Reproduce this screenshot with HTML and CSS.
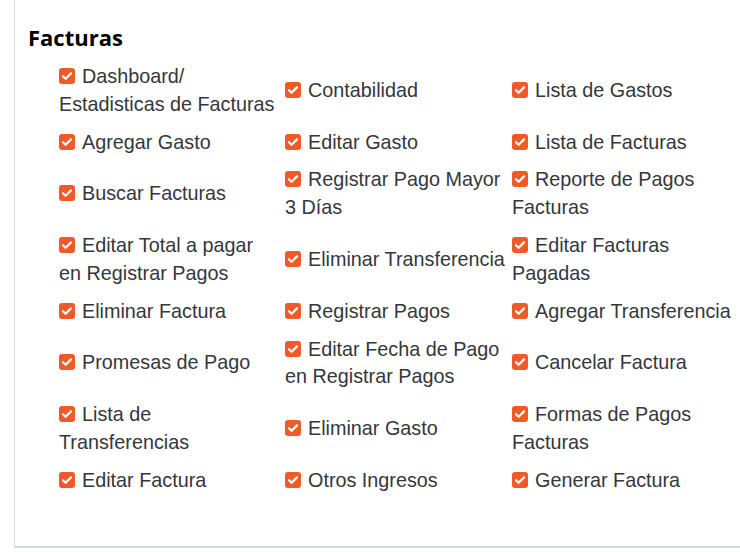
FILE: index.html
```html
<!DOCTYPE html>
<html lang="es">

<head>
    <meta charset="UTF-8">
    <meta name="viewport" content="width=device-width, initial-scale=1.0">
    <title>Permisos - Facturas</title>
    <link rel="stylesheet" href="styles.css">
</head>

<body>
    <div class="card">
        <h3 class="section-title">Facturas</h3>
        <div class="perm-grid">
            <label class="perm"><span class="check"><svg viewBox="0 0 16 16"><path d="M4 8.2l2.6 2.6L12 5.4"/></svg></span>Dashboard/ Estadisticas de Facturas</label>
            <label class="perm"><span class="check"><svg viewBox="0 0 16 16"><path d="M4 8.2l2.6 2.6L12 5.4"/></svg></span>Contabilidad</label>
            <label class="perm"><span class="check"><svg viewBox="0 0 16 16"><path d="M4 8.2l2.6 2.6L12 5.4"/></svg></span>Lista de Gastos</label>

            <label class="perm"><span class="check"><svg viewBox="0 0 16 16"><path d="M4 8.2l2.6 2.6L12 5.4"/></svg></span>Agregar Gasto</label>
            <label class="perm"><span class="check"><svg viewBox="0 0 16 16"><path d="M4 8.2l2.6 2.6L12 5.4"/></svg></span>Editar Gasto</label>
            <label class="perm"><span class="check"><svg viewBox="0 0 16 16"><path d="M4 8.2l2.6 2.6L12 5.4"/></svg></span>Lista de Facturas</label>

            <label class="perm"><span class="check"><svg viewBox="0 0 16 16"><path d="M4 8.2l2.6 2.6L12 5.4"/></svg></span>Buscar Facturas</label>
            <label class="perm"><span class="check"><svg viewBox="0 0 16 16"><path d="M4 8.2l2.6 2.6L12 5.4"/></svg></span>Registrar Pago Mayor 3 Días</label>
            <label class="perm"><span class="check"><svg viewBox="0 0 16 16"><path d="M4 8.2l2.6 2.6L12 5.4"/></svg></span>Reporte de Pagos Facturas</label>

            <label class="perm"><span class="check"><svg viewBox="0 0 16 16"><path d="M4 8.2l2.6 2.6L12 5.4"/></svg></span>Editar Total a pagar en Registrar Pagos</label>
            <label class="perm"><span class="check"><svg viewBox="0 0 16 16"><path d="M4 8.2l2.6 2.6L12 5.4"/></svg></span>Eliminar Transferencia</label>
            <label class="perm"><span class="check"><svg viewBox="0 0 16 16"><path d="M4 8.2l2.6 2.6L12 5.4"/></svg></span>Editar Facturas Pagadas</label>

            <label class="perm"><span class="check"><svg viewBox="0 0 16 16"><path d="M4 8.2l2.6 2.6L12 5.4"/></svg></span>Eliminar Factura</label>
            <label class="perm"><span class="check"><svg viewBox="0 0 16 16"><path d="M4 8.2l2.6 2.6L12 5.4"/></svg></span>Registrar Pagos</label>
            <label class="perm"><span class="check"><svg viewBox="0 0 16 16"><path d="M4 8.2l2.6 2.6L12 5.4"/></svg></span>Agregar Transferencia</label>

            <label class="perm"><span class="check"><svg viewBox="0 0 16 16"><path d="M4 8.2l2.6 2.6L12 5.4"/></svg></span>Promesas de Pago</label>
            <label class="perm"><span class="check"><svg viewBox="0 0 16 16"><path d="M4 8.2l2.6 2.6L12 5.4"/></svg></span>Editar Fecha de Pago en Registrar Pagos</label>
            <label class="perm"><span class="check"><svg viewBox="0 0 16 16"><path d="M4 8.2l2.6 2.6L12 5.4"/></svg></span>Cancelar Factura</label>

            <label class="perm"><span class="check"><svg viewBox="0 0 16 16"><path d="M4 8.2l2.6 2.6L12 5.4"/></svg></span>Lista de Transferencias</label>
            <label class="perm"><span class="check"><svg viewBox="0 0 16 16"><path d="M4 8.2l2.6 2.6L12 5.4"/></svg></span>Eliminar Gasto</label>
            <label class="perm"><span class="check"><svg viewBox="0 0 16 16"><path d="M4 8.2l2.6 2.6L12 5.4"/></svg></span>Formas de Pagos Facturas</label>

            <label class="perm"><span class="check"><svg viewBox="0 0 16 16"><path d="M4 8.2l2.6 2.6L12 5.4"/></svg></span>Editar Factura</label>
            <label class="perm"><span class="check"><svg viewBox="0 0 16 16"><path d="M4 8.2l2.6 2.6L12 5.4"/></svg></span>Otros Ingresos</label>
            <label class="perm"><span class="check"><svg viewBox="0 0 16 16"><path d="M4 8.2l2.6 2.6L12 5.4"/></svg></span>Generar Factura</label>
        </div>
    </div>
</body>

</html>
```

FILE: styles.css
```css
body {
    margin: 0;
    background: #fff;
    overflow: hidden;
    font-family: 'Liberation Sans', Arial, sans-serif;
}

.card {
    margin-left: 14px;
    padding: 22px 0 52px 13px;
    border-left: 1px solid #d5dbdb;
    border-bottom: 2px solid #d0d7d7;
}

.section-title {
    margin: 0;
    color: #000;
    font-family: 'Open Sans', sans-serif;
    font-size: 22px;
    font-weight: 700;
    line-height: 30px;
}

.perm-grid {
    display: grid;
    grid-template-columns: 226px 227px 227px;
    row-gap: 10.2px;
    align-items: center;
    margin: 11px 0 0 31px;
}

.perm {
    padding-right: 6px;
    color: #34373b;
    font-size: 19.8px;
    line-height: 27.7px;
    cursor: pointer;
}

.check {
    display: inline-block;
    width: 16px;
    height: 16px;
    margin-right: 7px;
    vertical-align: -1px;
    background: #ef5a28;
    border-radius: 3px;
}

.check svg {
    display: block;
    width: 16px;
    height: 16px;
    fill: none;
    stroke: #fff;
    stroke-width: 2.2;
    stroke-linecap: round;
    stroke-linejoin: round;
}
```
